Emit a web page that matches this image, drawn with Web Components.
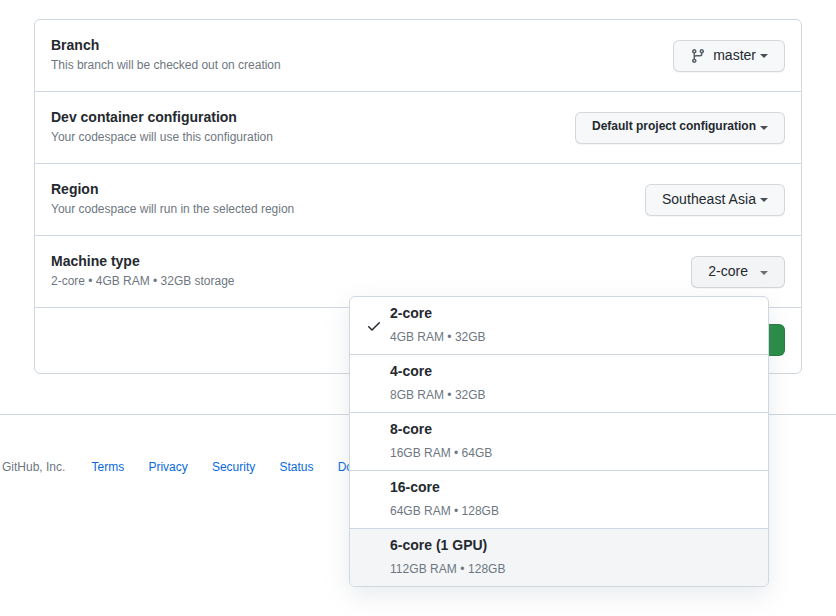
<!DOCTYPE html>
<html lang="en">
<head>
<meta charset="utf-8">
<title>Create codespace</title>
<style>
body{margin:0;background:#fff;color:#24292f;font:14px/20px "Liberation Sans",Arial,sans-serif;overflow:hidden;height:616px}
</style>
</head>
<body>
<codespace-page></codespace-page>
<script>
const define = (name, html) => {
  const t = document.createElement('template');
  t.innerHTML = html;
  customElements.define(name, class extends HTMLElement {
    constructor() {
      super();
      this.attachShadow({mode: 'open'}).append(t.content.cloneNode(true));
    }
  });
};

define('menu-button', `
<style>
:host{display:flex;box-sizing:border-box;height:32px;padding:0 16px;border:1px solid rgba(27,31,36,.15);border-radius:6px;background:#f6f8fa;box-shadow:0 1px 0 rgba(27,31,36,.04);line-height:28px;white-space:nowrap;flex:none}
:host([active]){background:#f3f4f6}
:host([small]){font-size:12px;font-weight:700;line-height:27px}
:host([active]) i{margin-top:14px;margin-left:12px;opacity:.8}
i{width:0;height:0;margin:13px 0 0 auto;border:4px solid transparent;border-top-color:#484d53;border-bottom:0}
i::before{content:none}
:host(:not([active])) i{margin-left:4px}
</style><slot></slot><i></i>`);

define('branch-icon', `
<style>:host{display:block;width:16px;height:16px;margin:7px 7px 0 0;color:#57606a}svg{display:block}</style>
<svg width="16" height="16" viewBox="0 0 16 16" fill="currentColor"><path fill-rule="evenodd" d="M11.75 2.5a.75.75 0 100 1.5.75.75 0 000-1.5zm-2.25.75a2.25 2.25 0 113 2.122V6A2.5 2.5 0 0110 8.5H6a1 1 0 00-1 1v1.128a2.251 2.251 0 11-1.5 0V5.372a2.25 2.25 0 111.5 0v1.836A2.492 2.492 0 016 7h4a1 1 0 001-1v-.628A2.25 2.25 0 019.5 3.25zM4.25 12a.75.75 0 100 1.5.75.75 0 000-1.5zM3.5 3.25a.75.75 0 111.5 0 .75.75 0 01-1.5 0z"/></svg>`);

define('option-row', `
<style>
:host{display:flex;box-sizing:border-box;height:72px;padding:15px 16px 0;border-bottom:1px solid #d0d7de;justify-content:space-between}
.t{font-weight:700}
.d{font-size:12px;letter-spacing:-.01px;color:#6e7781}
.b{display:flex;padding-top:5px}
</style>
<div><div class="t"><slot name="title"></slot></div><div class="d"><slot name="desc"></slot></div></div>
<div class="b"><slot></slot></div>`);

define('option-box', `
<style>
:host{display:block;box-sizing:border-box;width:768px;height:355px;margin:0 34px;border:1px solid #d0d7de;border-radius:6px}
footer{display:flex;justify-content:flex-end;padding:16px}
.go{box-sizing:border-box;width:140px;height:32px;border:1px solid rgba(27,31,36,.15);border-radius:6px;background:#268c44}
</style><slot></slot><footer><div class="go"></div></footer>`);

define('machine-item', `
<style>
:host{display:flex;box-sizing:border-box;height:58px;padding:6px 16px 0;border-bottom:1px solid #d0d7de}
:host([last]){height:57px;border-bottom:0;background:#f3f5f7}
.c{width:24px;padding-top:15px}
svg{display:none}
:host([checked]) svg{display:block}
.t{font-weight:700;line-height:20px}
.d{font-size:12px;line-height:18px;padding-top:5px;color:#6e7781}
:host([last]) .d{letter-spacing:.05px}
</style>
<div class="c"><svg width="16" height="16" viewBox="0 0 16 16" fill="#24292f"><path fill-rule="evenodd" d="M13.78 4.22a.75.75 0 010 1.06l-7.25 7.25a.75.75 0 01-1.06 0L2.22 9.28a.75.75 0 011.06-1.06L6 10.94l6.72-6.72a.75.75 0 011.06 0z"/></svg></div>
<div><div class="t"><slot></slot></div><div class="d"><slot name="spec"></slot></div></div>`);

define('machine-menu', `
<style>:host{display:block;box-sizing:border-box;width:420px;height:291px;border:1px solid #d0d7de;border-radius:6px;background:#fff;overflow:hidden;box-shadow:0 8px 24px rgba(140,149,159,.2)}</style><slot></slot>`);

define('site-footer', `
<style>
:host{display:flex;gap:24.2px;margin-top:40px;padding:42px 0 0 2px;border-top:1px solid #d0d7de;font-size:12px;color:#6e7781;white-space:nowrap}
::slotted(a){color:#096add;text-decoration:none}
::slotted(span){margin-right:2px}
</style><slot></slot>`);

define('codespace-page', `
<style>
:host{display:block;position:relative;padding-top:19px;height:616px;box-sizing:border-box;overflow:hidden}
machine-menu{position:absolute;left:349px;top:296px}
.region{letter-spacing:.05px}
</style>
<option-box>
<option-row><span slot="title">Branch</span><span slot="desc">This branch will be checked out on creation</span><menu-button><branch-icon></branch-icon>master</menu-button></option-row>
<option-row><span slot="title">Dev container configuration</span><span slot="desc">Your codespace will use this configuration</span><menu-button small>Default project configuration</menu-button></option-row>
<option-row><span slot="title">Region</span><span slot="desc">Your codespace will run in the selected region</span><menu-button class="region">Southeast Asia</menu-button></option-row>
<option-row><span slot="title">Machine type</span><span slot="desc">2-core • 4GB RAM • 32GB storage</span><menu-button active>2-core</menu-button></option-row>
</option-box>
<site-footer><span>GitHub, Inc.</span><a>Terms</a><a>Privacy</a><a>Security</a><a>Status</a><a>Do</a></site-footer>
<machine-menu>
<machine-item checked>2-core<span slot="spec">4GB RAM • 32GB</span></machine-item>
<machine-item>4-core<span slot="spec">8GB RAM • 32GB</span></machine-item>
<machine-item>8-core<span slot="spec">16GB RAM • 64GB</span></machine-item>
<machine-item>16-core<span slot="spec">64GB RAM • 128GB</span></machine-item>
<machine-item last>6-core (1 GPU)<span slot="spec">112GB RAM • 128GB</span></machine-item>
</machine-menu>`);
</script>
</body>
</html>
